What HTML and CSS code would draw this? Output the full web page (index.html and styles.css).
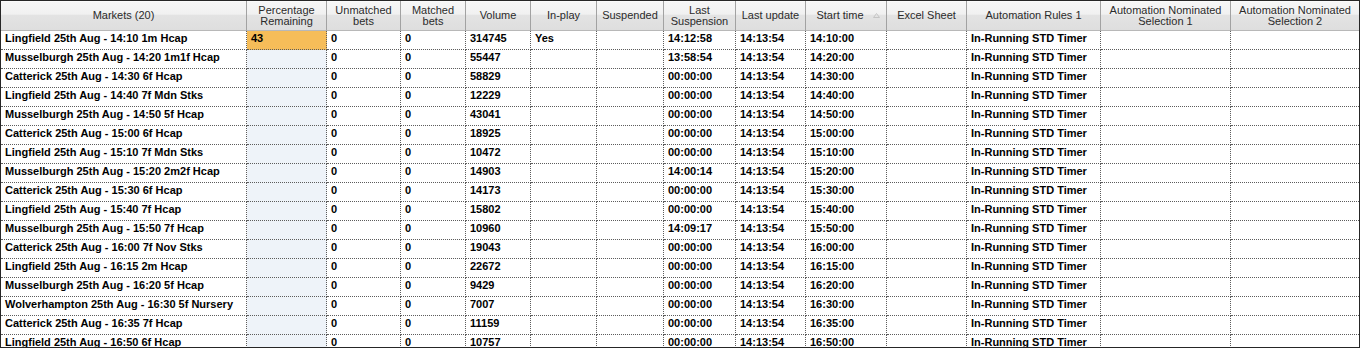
FILE: index.html
```html
<!DOCTYPE html>
<html lang="en">
<head>
    <meta charset="UTF-8">
    <meta name="viewport" content="width=device-width, initial-scale=1.0">
    <title>Markets</title>
    <link rel="stylesheet" href="styles.css">
</head>
<body>
    <div class="grid">
        <div class="grid-row head">
            <div class="hcell">Markets (20)</div>
            <div class="hcell">Percentage<br>Remaining</div>
            <div class="hcell">Unmatched<br>bets</div>
            <div class="hcell">Matched<br>bets</div>
            <div class="hcell">Volume</div>
            <div class="hcell">In-play</div>
            <div class="hcell">Suspended</div>
            <div class="hcell">Last<br>Suspension</div>
            <div class="hcell">Last update</div>
            <div class="hcell sorted">Start time
                <svg class="sort-arrow" width="7" height="5" viewBox="0 0 7 5"><path d="M0.5 4.5 L3.5 0.5 L6.5 4.5 Z" fill="none" stroke="#c4c4c4" stroke-width="1"/></svg>
            </div>
            <div class="hcell">Excel Sheet</div>
            <div class="hcell">Automation Rules 1</div>
            <div class="hcell">Automation Nominated<br>Selection 1</div>
            <div class="hcell">Automation Nominated<br>Selection 2</div>
        </div>
        <div id="rows"></div>
    </div>

    <script>
        // market, percentage, volume, in-play, last suspension, start time
        const markets = [
            ['Lingfield 25th Aug - 14:10 1m Hcap', '43', '314745', 'Yes', '14:12:58', '14:10:00'],
            ['Musselburgh 25th Aug - 14:20 1m1f Hcap', '', '55447', '', '13:58:54', '14:20:00'],
            ['Catterick 25th Aug - 14:30 6f Hcap', '', '58829', '', '00:00:00', '14:30:00'],
            ['Lingfield 25th Aug - 14:40 7f Mdn Stks', '', '12229', '', '00:00:00', '14:40:00'],
            ['Musselburgh 25th Aug - 14:50 5f Hcap', '', '43041', '', '00:00:00', '14:50:00'],
            ['Catterick 25th Aug - 15:00 6f Hcap', '', '18925', '', '00:00:00', '15:00:00'],
            ['Lingfield 25th Aug - 15:10 7f Mdn Stks', '', '10472', '', '00:00:00', '15:10:00'],
            ['Musselburgh 25th Aug - 15:20 2m2f Hcap', '', '14903', '', '14:00:14', '15:20:00'],
            ['Catterick 25th Aug - 15:30 6f Hcap', '', '14173', '', '00:00:00', '15:30:00'],
            ['Lingfield 25th Aug - 15:40 7f Hcap', '', '15802', '', '00:00:00', '15:40:00'],
            ['Musselburgh 25th Aug - 15:50 7f Hcap', '', '10960', '', '14:09:17', '15:50:00'],
            ['Catterick 25th Aug - 16:00 7f Nov Stks', '', '19043', '', '00:00:00', '16:00:00'],
            ['Lingfield 25th Aug - 16:15 2m Hcap', '', '22672', '', '00:00:00', '16:15:00'],
            ['Musselburgh 25th Aug - 16:20 5f Hcap', '', '9429', '', '00:00:00', '16:20:00'],
            ['Wolverhampton 25th Aug - 16:30 5f Nursery', '', '7007', '', '00:00:00', '16:30:00'],
            ['Catterick 25th Aug - 16:35 7f Hcap', '', '11159', '', '00:00:00', '16:35:00'],
            ['Lingfield 25th Aug - 16:50 6f Hcap', '', '10757', '', '00:00:00', '16:50:00']
        ];

        const rows = document.getElementById('rows');
        markets.forEach(function(m) {
            const cells = [m[0], m[1], '0', '0', m[2], m[3], '', m[4], '14:13:54', m[5], '', 'In-Running STD Timer', '', ''];
            const row = document.createElement('div');
            row.className = 'grid-row';
            cells.forEach(function(text, i) {
                const cell = document.createElement('div');
                cell.className = 'cell';
                if (i === 1) {
                    cell.classList.add(text ? 'pct-hot' : 'pct');
                }
                cell.textContent = text;
                row.appendChild(cell);
            });
            rows.appendChild(row);
        });
    </script>
</body>
</html>
```

FILE: styles.css
```css
body {
    margin: 0;
    background-color: #ffffff;
}
.grid {
    width: 1360px;
    height: 348px;
    box-sizing: border-box;
    border: 1px solid #262626;
    overflow: hidden;
    background-color: #ffffff;
}
.grid-row {
    display: grid;
    grid-template-columns: 246px 80px 74px 65px 65px 66px 67px 72px 70px 81px 80px 134px 130px 128px;
}
.hcell {
    position: relative;
    height: 30px;
    box-sizing: border-box;
    display: flex;
    align-items: center;
    justify-content: center;
    text-align: center;
    font-family: "Liberation Sans", Arial, sans-serif;
    font-size: 11px;
    line-height: 11px;
    color: #2b2b2b;
    border-right: 1px solid #a2a2a2;
    border-bottom: 1px solid #b8b8b8;
    background: linear-gradient(#ffffff 0, #f6f6f6 1px, #f1f1f1 45%, #e3e3e3 50%, #dedede 100%);
}
.hcell:last-child {
    border-right: none;
}
.sorted {
    padding-right: 12px;
}
.sort-arrow {
    position: absolute;
    right: 6px;
    top: 12px;
}
.cell {
    height: 19px;
    box-sizing: border-box;
    padding: 0 4px;
    border-right: 1px dotted #5c5c5c;
    border-bottom: 1px dotted #5c5c5c;
    font-family: "Liberation Sans", Arial, sans-serif;
    font-size: 11px;
    font-weight: bold;
    line-height: 14px;
    color: #000000;
    white-space: nowrap;
    overflow: hidden;
}
.cell:last-child {
    border-right: none;
}
.pct {
    background-color: #eef3f9;
}
.pct-hot {
    background-color: #f6bd59;
}
```
